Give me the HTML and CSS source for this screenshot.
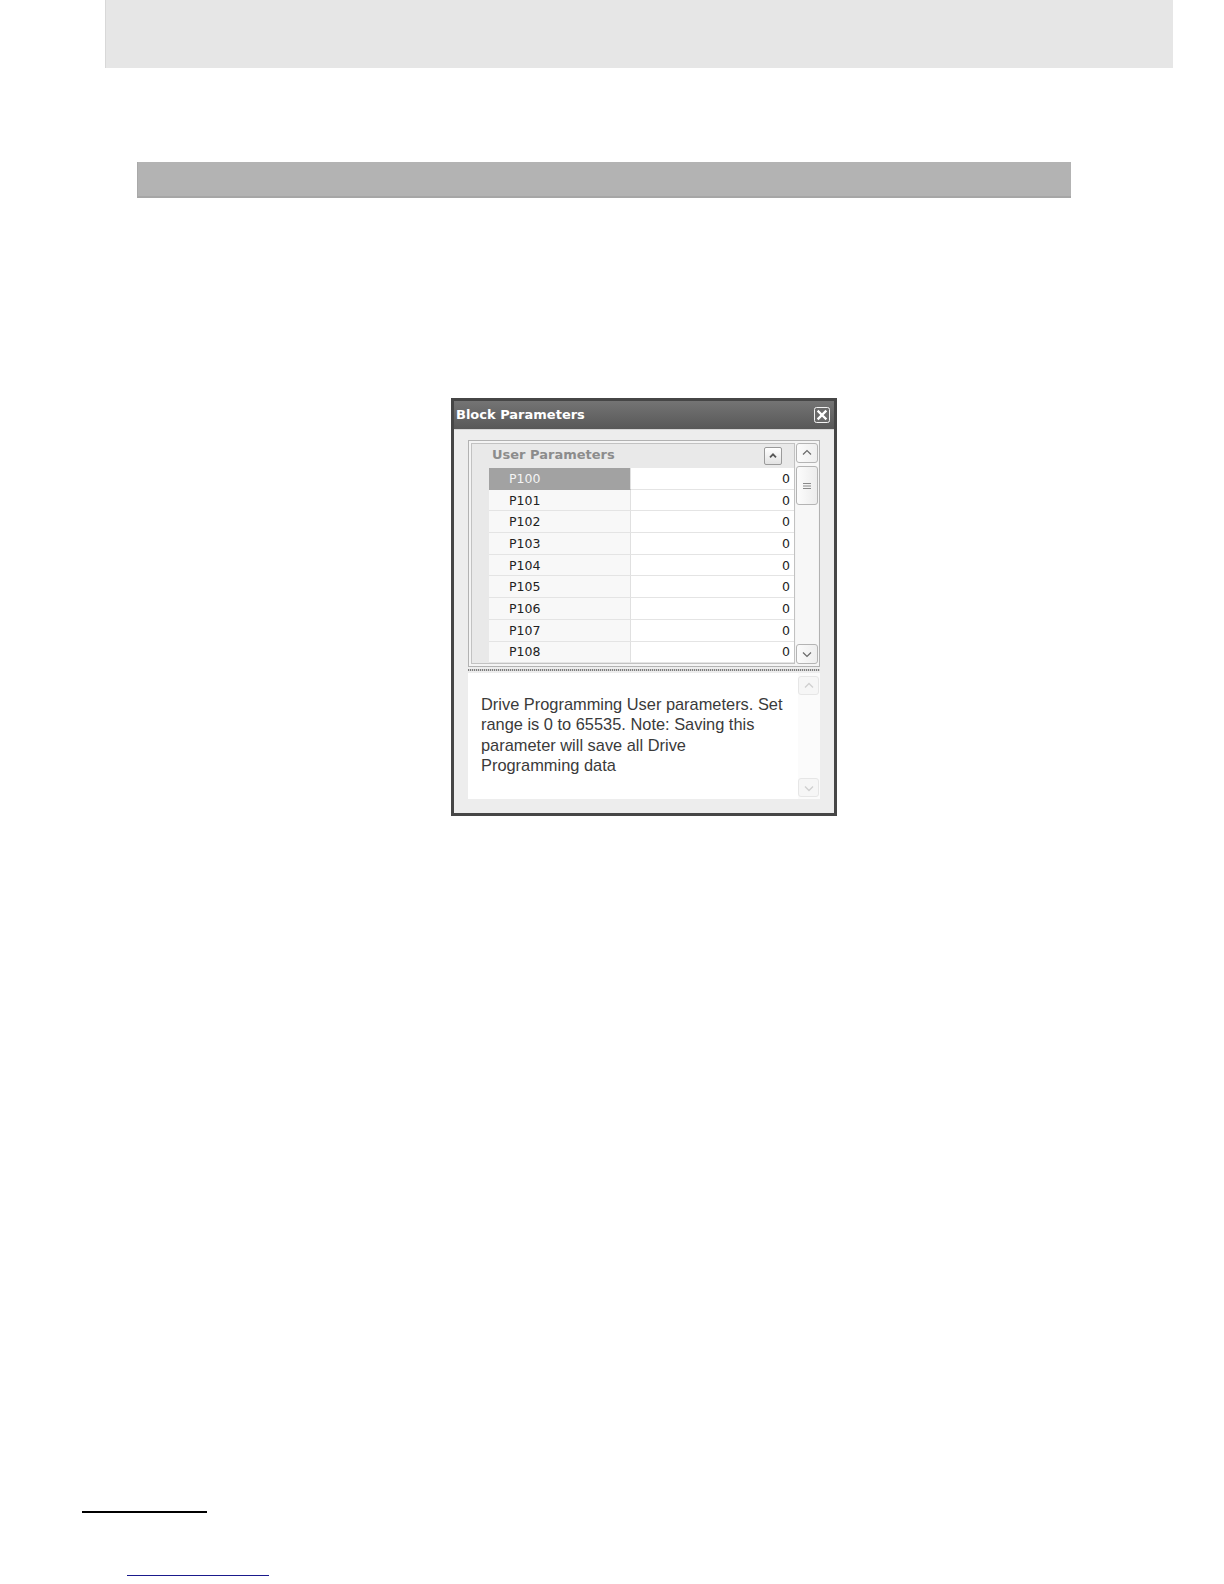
FILE: index.html
```html
<!DOCTYPE html>
<html>
<head>
<meta charset="utf-8">
<title>Block Parameters</title>
<link rel="stylesheet" href="styles.css">
</head>
<body>
<div class="page">
  <div class="top-band"></div>
  <div class="section-bar"></div>

  <div class="dialog">
    <div class="titlebar">
      <span class="title">Block Parameters</span>
      <span class="close">
        <svg width="16" height="16" viewBox="0 0 16 16">
          <rect x="0.5" y="0.5" width="15" height="15" rx="2" fill="#6a6a6a" stroke="#f2f2f2"/>
          <path d="M4.5 4.5 L11.5 11.5 M11.5 4.5 L4.5 11.5" stroke="#ffffff" stroke-width="2.4" stroke-linecap="square"/>
        </svg>
      </span>
    </div>
    <div class="client">
      <div class="grid-panel">
        <div class="grid-frame">
          <div class="category">
            <span class="cat-margin"></span>
            <span class="cat-label">User Parameters</span>
            <span class="collapse-btn">
              <svg width="16" height="16" viewBox="0 0 16 16"><path d="M5 9.3 L8 6.3 L11 9.3" fill="none" stroke="#555" stroke-width="1.8"/></svg>
            </span>
          </div>
          <div class="rows">
            <div class="row selected"><span class="margin"></span><span class="name">P100</span><span class="value">0</span></div>
            <div class="row"><span class="margin"></span><span class="name">P101</span><span class="value">0</span></div>
            <div class="row"><span class="margin"></span><span class="name">P102</span><span class="value">0</span></div>
            <div class="row"><span class="margin"></span><span class="name">P103</span><span class="value">0</span></div>
            <div class="row"><span class="margin"></span><span class="name">P104</span><span class="value">0</span></div>
            <div class="row"><span class="margin"></span><span class="name">P105</span><span class="value">0</span></div>
            <div class="row"><span class="margin"></span><span class="name">P106</span><span class="value">0</span></div>
            <div class="row"><span class="margin"></span><span class="name">P107</span><span class="value">0</span></div>
            <div class="row"><span class="margin"></span><span class="name">P108</span><span class="value">0</span></div>
          </div>
        </div>
        <div class="vscroll">
          <div class="sb-btn">
            <svg width="20" height="18" viewBox="0 0 20 18"><path d="M6 10.5 L10 6.5 L14 10.5" fill="none" stroke="#6a6a6a" stroke-width="1.2"/></svg>
          </div>
          <div class="sb-thumb">
            <svg width="10" height="8" viewBox="0 0 10 8"><path d="M1 1.5 H9 M1 4 H9 M1 6.5 H9" stroke="#8a8a8a" stroke-width="1"/></svg>
          </div>
          <div class="sb-track"></div>
          <div class="sb-btn">
            <svg width="20" height="18" viewBox="0 0 20 18"><path d="M6 7.5 L10 11.5 L14 7.5" fill="none" stroke="#6a6a6a" stroke-width="1.2"/></svg>
          </div>
        </div>
      </div>

      <div class="splitter"></div>

      <div class="desc">
        <div class="desc-text">Drive Programming User parameters. Set<br>range is 0 to 65535. Note: Saving this<br>parameter will save all Drive<br>Programming data</div>
        <div class="vscroll disabled">
          <div class="sb-btn">
            <svg width="18" height="18" viewBox="0 0 18 18"><path d="M5 10.5 L9 6.5 L13 10.5" fill="none" stroke="#d0d0d0" stroke-width="1.4"/></svg>
          </div>
          <div class="sb-track"></div>
          <div class="sb-btn">
            <svg width="18" height="18" viewBox="0 0 18 18"><path d="M5 7.5 L9 11.5 L13 7.5" fill="none" stroke="#d0d0d0" stroke-width="1.4"/></svg>
          </div>
        </div>
      </div>
    </div>
  </div>

  <div class="footer-rule"></div>
  <div class="footer-link"></div>
</div>
</body>
</html>
```

FILE: styles.css
```css
html, body {
  margin: 0;
  padding: 0;
  background: #ffffff;
}

.page {
  width: 1224px;
  height: 1584px;
  overflow: hidden;
  font-family: "DejaVu Sans", sans-serif;
}

.top-band {
  margin-left: 105px;
  width: 1068px;
  height: 68px;
  background: #e6e6e6;
  border-left: 1px solid #d8d8d8;
  box-sizing: border-box;
}

.section-bar {
  margin-top: 94px;
  margin-left: 137px;
  width: 934px;
  height: 36px;
  background: #b3b3b3;
  border-left: 1px solid #a9a9a9;
  border-bottom: 2px solid #a6a6a6;
  box-sizing: border-box;
}

/* ---------- dialog ---------- */
.dialog {
  margin-top: 200px;
  margin-left: 451px;
  width: 386px;
  height: 418px;
  box-sizing: border-box;
  border: 3px solid #464646;
  background: #ededed;
  display: flex;
  flex-direction: column;
}

.titlebar {
  height: 28px;
  flex: none;
  display: flex;
  align-items: center;
  justify-content: space-between;
  padding: 0 4px 0 2px;
  background: linear-gradient(#747474, #585858);
}

.title {
  color: #ffffff;
  font-weight: bold;
  font-size: 13px;
  padding-bottom: 1px;
}

.close {
  display: flex;
  width: 16px;
  height: 16px;
}

.client {
  flex: 1;
  padding: 10px 14px 15px 14px;
  display: flex;
  flex-direction: column;
  border-top: 1px solid #d6d6d6;
}

/* ---------- property grid ---------- */
.grid-panel {
  height: 227px;
  flex: none;
  box-sizing: border-box;
  border: 1px solid #b2b2b2;
  padding: 2px 1px 2px 2px;
  display: flex;
  gap: 1px;
  background: #f4f4f4;
}

.grid-frame {
  flex: 1;
  border: 1px solid #c2c2c2;
  background: #ffffff;
  display: flex;
  flex-direction: column;
  overflow: hidden;
}

.category {
  height: 24px;
  flex: none;
  display: flex;
  align-items: center;
  background: #e9e9e9;
}

.cat-margin {
  width: 17px;
  flex: none;
}

.cat-label {
  flex: 1;
  padding-left: 3px;
  padding-bottom: 4px;
  color: #8c8c8c;
  font-weight: bold;
  font-size: 13px;
}

.collapse-btn {
  width: 16px;
  height: 16px;
  margin-right: 12px;
  border: 1px solid #9a9a9a;
  border-radius: 2px;
  background: linear-gradient(#ffffff, #e2e2e2);
  display: flex;
}

.rows {
  flex: 1;
  display: flex;
  flex-direction: column;
}

.row {
  height: 21.7px;
  flex: none;
  display: flex;
  font-size: 12.5px;
  color: #222222;
}

.row .margin {
  width: 17px;
  flex: none;
  background: #e9e9e9;
}

.row .name {
  width: 142px;
  flex: none;
  box-sizing: border-box;
  padding-left: 20px;
  display: flex;
  align-items: center;
  background: #f8f8f8;
  border-bottom: 1px solid #e4e4e4;
  border-right: 1px solid #e0e0e0;
}

.row .value {
  flex: 1;
  box-sizing: border-box;
  padding-right: 4px;
  display: flex;
  align-items: center;
  justify-content: flex-end;
  background: #ffffff;
  border-bottom: 1px solid #e4e4e4;
}

.row.selected .name {
  background: #a2a2a2;
  color: #f4f4f4;
  border-bottom-color: #a2a2a2;
}

/* ---------- scrollbars ---------- */
.vscroll {
  width: 22px;
  flex: none;
  display: flex;
  flex-direction: column;
  background: #f7f7f7;
}

.sb-btn {
  height: 20px;
  flex: none;
  box-sizing: border-box;
  border: 1px solid #b4b4b4;
  border-radius: 3px;
  background: linear-gradient(90deg, #fbfbfb, #eeeeee);
  display: flex;
  align-items: center;
  justify-content: center;
}

.sb-thumb {
  height: 39px;
  flex: none;
  margin-top: 3px;
  box-sizing: border-box;
  border: 1px solid #b4b4b4;
  border-radius: 3px;
  background: linear-gradient(90deg, #fcfcfc, #ececec);
  display: flex;
  align-items: center;
  justify-content: center;
}

.sb-track {
  flex: 1;
}

.vscroll.disabled {
  width: 21px;
  padding: 3px 1px 2px 0;
  background: #fbfbfb;
}

.vscroll.disabled .sb-btn {
  height: 19px;
  border-color: #e6e6e6;
  background: #f6f6f6;
}

/* ---------- splitter ---------- */
.splitter {
  height: 6px;
  flex: none;
  box-sizing: border-box;
  border-top: 2px solid #ededed;
  border-bottom: 2px solid #ededed;
  background: repeating-linear-gradient(90deg, #7e7e7e 0 1px, #d4d4d4 1px 2px);
}

/* ---------- description ---------- */
.desc {
  height: 126px;
  flex: none;
  display: flex;
  background: #ffffff;
}

.desc-text {
  flex: 1;
  padding: 21px 4px 0 13px;
  font-family: "Liberation Sans", Arial, sans-serif;
  font-size: 16.4px;
  line-height: 20.3px;
  color: #3a3a3a;
  white-space: nowrap;
}

/* ---------- footer ---------- */
.footer-rule {
  margin-top: 695px;
  margin-left: 82px;
  width: 125px;
  height: 2px;
  background: #000000;
}

.footer-link {
  margin-top: 62px;
  margin-left: 127px;
  width: 142px;
  height: 1px;
  background: #1a1a8c;
}
```
